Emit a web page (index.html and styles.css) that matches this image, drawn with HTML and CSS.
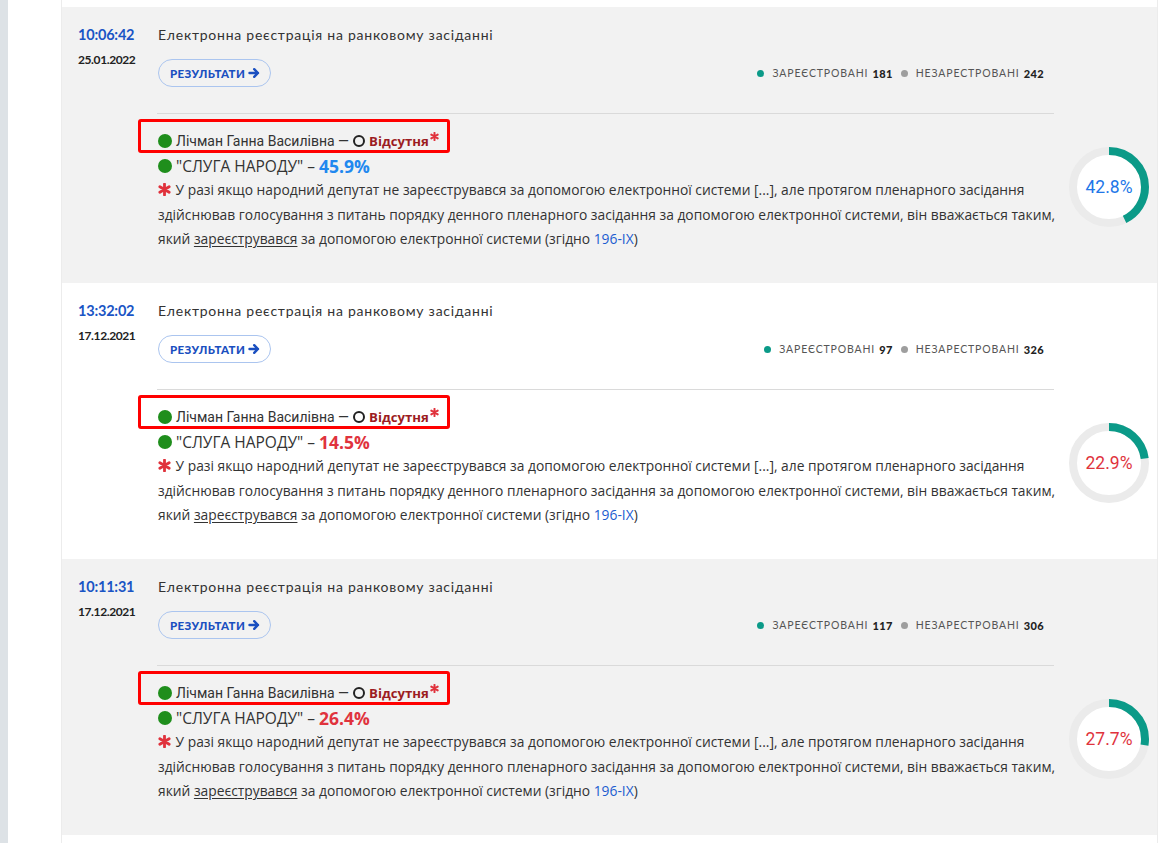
FILE: index.html
```html
<!DOCTYPE html>
<html lang="uk">
<head>
<meta charset="utf-8">
<title>Реєстрація депутата</title>
<link rel="stylesheet" href="styles.css">
</head>
<body>
<div class="page">
  <div class="rail"></div>
  <main class="feed">

    <section class="card alt">
      <div class="time-col">
        <div class="time">10:06:42</div>
        <div class="date">25.01.2022</div>
      </div>
      <div class="head">
        <div class="title">Електронна реєстрація на ранковому засіданні</div>
        <div class="actions">
          <a class="btn" href="#">РЕЗУЛЬТАТИ <svg class="arrow" viewBox="0 0 12 12" width="12" height="12"><path d="M1.5 6H10M6.2 2.2L10 6L6.2 9.8" fill="none" stroke="currentColor" stroke-width="2.4" stroke-linecap="round" stroke-linejoin="round"/></svg></a>
          <div class="legend">
            <span class="dot teal"></span>Зареєстровані<b>181</b>
            <span class="dot grey"></span>Незарестровані<b>242</b>
          </div>
        </div>
      </div>
      <div class="body">
        <div class="name mark"><span class="gdot"></span>Лічман Ганна Василівна —<span class="ring"></span><strong class="absent">Відсутня</strong><svg class="star sup" viewBox="0 0 12 12"><path d="M6 1V11M1.7 3.5L10.3 8.5M1.7 8.5L10.3 3.5" stroke="currentColor" stroke-width="2.6" stroke-linecap="round"/></svg></div>
        <div class="party"><span class="gdot"></span>"СЛУГА НАРОДУ" –&nbsp;<span class="pct blue">45.9%</span></div>
        <p class="note"><svg class="star" viewBox="0 0 12 12"><path d="M6 1V11M1.7 3.5L10.3 8.5M1.7 8.5L10.3 3.5" stroke="currentColor" stroke-width="2.6" stroke-linecap="round"/></svg> У разі якщо народний депутат не зареєструвався за допомогою електронної системи [...], але протягом пленарного засідання здійснював голосування з питань порядку денного пленарного засідання за допомогою електронної системи, він вважається таким, який <span class="ul">зареєструвався</span> за допомогою електронної системи (згідно <a class="law" href="#">196-IX</a>)</p>
      </div>
      <div class="donut">
        <svg viewBox="0 0 80 80" width="80" height="80"><circle cx="40" cy="40" r="36" class="track"/><circle cx="40" cy="40" r="36" class="arc" stroke-dasharray="96.81 226.19" transform="rotate(-90 40 40)"/></svg>
        <span class="dlabel blue">42.8%</span>
      </div>
    </section>

    <section class="card">
      <div class="time-col">
        <div class="time">13:32:02</div>
        <div class="date">17.12.2021</div>
      </div>
      <div class="head">
        <div class="title">Електронна реєстрація на ранковому засіданні</div>
        <div class="actions">
          <a class="btn" href="#">РЕЗУЛЬТАТИ <svg class="arrow" viewBox="0 0 12 12" width="12" height="12"><path d="M1.5 6H10M6.2 2.2L10 6L6.2 9.8" fill="none" stroke="currentColor" stroke-width="2.4" stroke-linecap="round" stroke-linejoin="round"/></svg></a>
          <div class="legend">
            <span class="dot teal"></span>Зареєстровані<b>97</b>
            <span class="dot grey"></span>Незарестровані<b>326</b>
          </div>
        </div>
      </div>
      <div class="body">
        <div class="name mark"><span class="gdot"></span>Лічман Ганна Василівна —<span class="ring"></span><strong class="absent">Відсутня</strong><svg class="star sup" viewBox="0 0 12 12"><path d="M6 1V11M1.7 3.5L10.3 8.5M1.7 8.5L10.3 3.5" stroke="currentColor" stroke-width="2.6" stroke-linecap="round"/></svg></div>
        <div class="party"><span class="gdot"></span>"СЛУГА НАРОДУ" –&nbsp;<span class="pct red">14.5%</span></div>
        <p class="note"><svg class="star" viewBox="0 0 12 12"><path d="M6 1V11M1.7 3.5L10.3 8.5M1.7 8.5L10.3 3.5" stroke="currentColor" stroke-width="2.6" stroke-linecap="round"/></svg> У разі якщо народний депутат не зареєструвався за допомогою електронної системи [...], але протягом пленарного засідання здійснював голосування з питань порядку денного пленарного засідання за допомогою електронної системи, він вважається таким, який <span class="ul">зареєструвався</span> за допомогою електронної системи (згідно <a class="law" href="#">196-IX</a>)</p>
      </div>
      <div class="donut">
        <svg viewBox="0 0 80 80" width="80" height="80"><circle cx="40" cy="40" r="36" class="track"/><circle cx="40" cy="40" r="36" class="arc" stroke-dasharray="51.80 226.19" transform="rotate(-90 40 40)"/></svg>
        <span class="dlabel red">22.9%</span>
      </div>
    </section>

    <section class="card alt">
      <div class="time-col">
        <div class="time">10:11:31</div>
        <div class="date">17.12.2021</div>
      </div>
      <div class="head">
        <div class="title">Електронна реєстрація на ранковому засіданні</div>
        <div class="actions">
          <a class="btn" href="#">РЕЗУЛЬТАТИ <svg class="arrow" viewBox="0 0 12 12" width="12" height="12"><path d="M1.5 6H10M6.2 2.2L10 6L6.2 9.8" fill="none" stroke="currentColor" stroke-width="2.4" stroke-linecap="round" stroke-linejoin="round"/></svg></a>
          <div class="legend">
            <span class="dot teal"></span>Зареєстровані<b>117</b>
            <span class="dot grey"></span>Незарестровані<b>306</b>
          </div>
        </div>
      </div>
      <div class="body">
        <div class="name mark"><span class="gdot"></span>Лічман Ганна Василівна —<span class="ring"></span><strong class="absent">Відсутня</strong><svg class="star sup" viewBox="0 0 12 12"><path d="M6 1V11M1.7 3.5L10.3 8.5M1.7 8.5L10.3 3.5" stroke="currentColor" stroke-width="2.6" stroke-linecap="round"/></svg></div>
        <div class="party"><span class="gdot"></span>"СЛУГА НАРОДУ" –&nbsp;<span class="pct red">26.4%</span></div>
        <p class="note"><svg class="star" viewBox="0 0 12 12"><path d="M6 1V11M1.7 3.5L10.3 8.5M1.7 8.5L10.3 3.5" stroke="currentColor" stroke-width="2.6" stroke-linecap="round"/></svg> У разі якщо народний депутат не зареєструвався за допомогою електронної системи [...], але протягом пленарного засідання здійснював голосування з питань порядку денного пленарного засідання за допомогою електронної системи, він вважається таким, який <span class="ul">зареєструвався</span> за допомогою електронної системи (згідно <a class="law" href="#">196-IX</a>)</p>
      </div>
      <div class="donut">
        <svg viewBox="0 0 80 80" width="80" height="80"><circle cx="40" cy="40" r="36" class="track"/><circle cx="40" cy="40" r="36" class="arc" stroke-dasharray="62.65 226.19" transform="rotate(-90 40 40)"/></svg>
        <span class="dlabel red">27.7%</span>
      </div>
    </section>

  </main>
</div>
</body>
</html>
```

FILE: styles.css
```css
html, body {
  margin: 0;
  background: #fff;
}

body {
  font-family: "Open Sans", "Noto Sans", sans-serif;
  color: #333;
  overflow: hidden;
}

.page {
  display: flex;
  height: 843px;
}

.rail {
  flex: none;
  width: 8px;
  background: #dde2e6;
}

.feed {
  flex: none;
  margin-left: 53px;
  width: 1095px;
  padding-top: 7px;
  border-left: 1px solid #ececec;
  border-right: 1px solid #ececec;
}

/* one registration event */
.card {
  display: grid;
  grid-template-columns: 79px 897px 1fr;
  grid-template-rows: auto auto;
  align-items: start;
  align-content: start;
  height: 276px;
  box-sizing: border-box;
  padding: 18px 0 0 16px;
  background: #fff;
}

.card.alt {
  background: #f2f2f2;
}

.time-col {
  grid-column: 1;
  grid-row: 1 / 3;
  font-family: Lato, sans-serif;
}

.time {
  font-size: 14.5px;
  line-height: 20px;
  font-weight: 700;
  color: #1a55c5;
  letter-spacing: -0.2px;
}

.date {
  margin-top: 6px;
  font-size: 12px;
  line-height: 18px;
  font-weight: 700;
  color: #222;
  letter-spacing: -0.4px;
}

.head {
  grid-column: 2;
  grid-row: 1;
  padding-left: 1px;
}

.title {
  font-family: Lato, sans-serif;
  font-size: 14px;
  line-height: 20px;
  letter-spacing: 0.75px;
  color: #333;
}

.actions {
  display: flex;
  justify-content: space-between;
  align-items: center;
  margin-top: 14px;
  padding-right: 10px;
}

.btn {
  display: inline-flex;
  align-items: center;
  gap: 3px;
  height: 28px;
  box-sizing: border-box;
  padding: 0 10px 0 11px;
  border: 1px solid #abc5ef;
  border-radius: 14px;
  font-family: Lato, sans-serif;
  font-size: 11.5px;
  font-weight: 900;
  letter-spacing: 0.4px;
  color: #1a4fc0;
  text-decoration: none;
}

.arrow {
  display: block;
}

.legend {
  display: flex;
  align-items: center;
  font-family: Lato, sans-serif;
  font-size: 10.5px;
  letter-spacing: 0.85px;
  text-transform: uppercase;
  color: #555;
}

.legend b {
  margin: 0 8px 0 4px;
  font-size: 11px;
  font-weight: 900;
  color: #222;
  letter-spacing: 0.4px;
}

.legend b:last-child {
  margin-right: 0;
}

.dot {
  width: 7px;
  height: 7px;
  margin-right: 8px;
  border-radius: 50%;
}

.dot.teal { background: #0b9a88; }
.dot.grey { background: #9e9e9e; }

.body {
  grid-column: 2;
  grid-row: 2;
  margin-top: 26px;
  padding-top: 14px;
  border-top: 1px solid #dadada;
  padding-left: 1px;
}

.name {
  display: inline-flex;
  align-items: center;
  font-family: Roboto, sans-serif;
  font-size: 14px;
  line-height: 26px;
  color: #333;
}

/* highlight frame drawn over the deputy line */
.mark {
  position: relative;
}

.mark::after {
  content: "";
  position: absolute;
  left: -20px;
  right: -11px;
  top: -9px;
  bottom: 1px;
  border: 3px solid #ff0000;
  border-radius: 3px;
  pointer-events: none;
}

.gdot {
  flex: none;
  width: 14px;
  height: 14px;
  margin-right: 4px;
  border-radius: 50%;
  background: #1f8e1c;
}

.ring {
  flex: none;
  width: 8px;
  height: 8px;
  margin: 0 4px 0 4px;
  border: 2px solid #222;
  border-radius: 50%;
}

.absent {
  font-family: "Open Sans", sans-serif;
  font-weight: 700;
  font-size: 13.2px;
  color: #9c1c22;
}

.star {
  display: inline-block;
  width: 13px;
  height: 13px;
  margin-right: 1px;
  color: #e0323c;
  vertical-align: -1px;
}

.star.sup {
  width: 9px;
  height: 9px;
  align-self: flex-start;
  margin-top: 4px;
  margin-left: 1px;
  margin-right: 0;
}

.party {
  display: flex;
  align-items: center;
  font-size: 15.5px;
  line-height: 24px;
  color: #333;
}

.pct {
  font-size: 17.5px;
  font-weight: 700;
}

.blue { color: #2188ef; }
.red { color: #e0333d; }

.note {
  margin: 0 -5px 0 0;
  font-size: 13.8px;
  line-height: 24.5px;
  color: #333;
}

.ul {
  text-decoration: underline;
  text-underline-offset: 2px;
}

.law {
  color: #1b5cd0;
  text-decoration: none;
}

.donut {
  grid-column: 3;
  grid-row: 2;
  display: grid;
  width: 80px;
  height: 80px;
  margin: 60px 0 0 15px;
}

.donut svg,
.dlabel {
  grid-area: 1 / 1;
}

.track {
  fill: #fff;
  stroke: #ebebeb;
  stroke-width: 8;
}

.arc {
  fill: none;
  stroke: #0b9a88;
  stroke-width: 8;
}

.dlabel {
  align-self: center;
  justify-self: center;
  font-family: Roboto, sans-serif;
  font-size: 17.5px;
}

.dlabel.red { color: #e0333d; }
.dlabel.blue { color: #2176e8; }
```
